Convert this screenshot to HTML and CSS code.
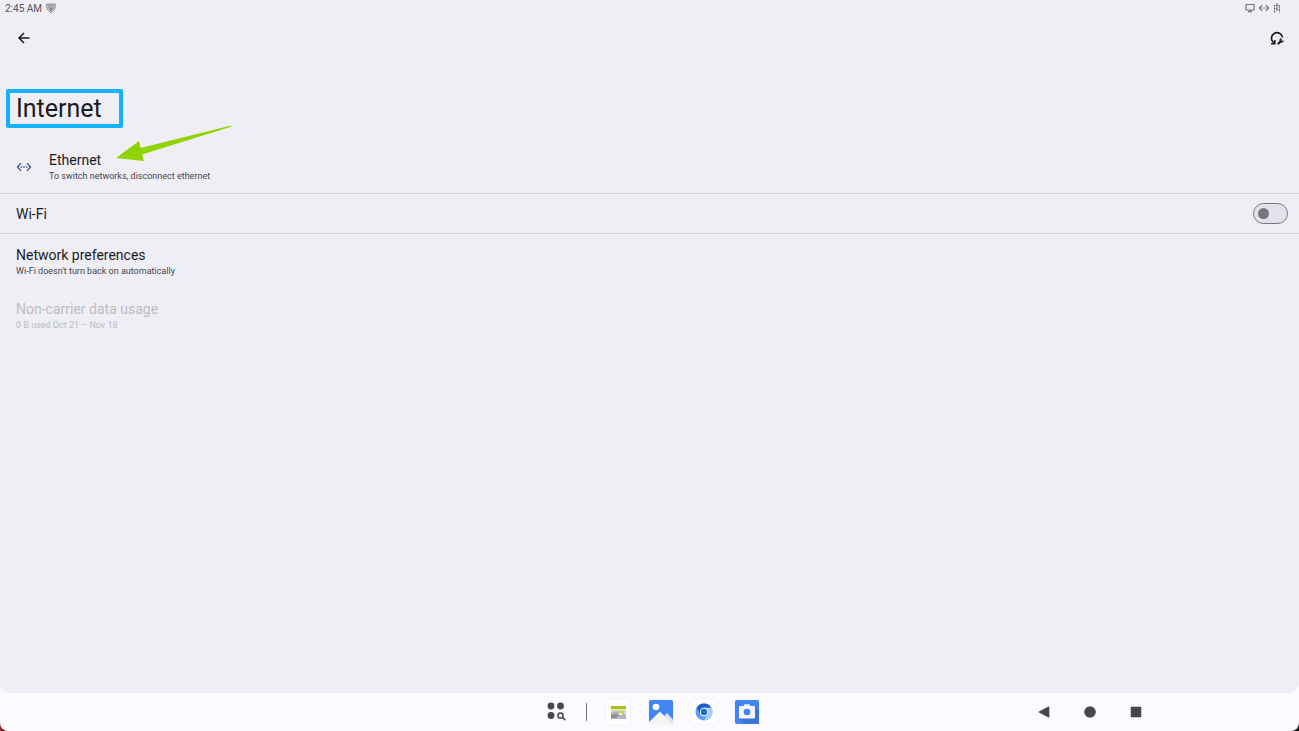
FILE: index.html
```html
<!DOCTYPE html>
<html lang="en">
<head>
    <meta charset="UTF-8">
    <meta name="viewport" content="width=device-width, initial-scale=1.0">
    <title>Internet</title>
    <link rel="stylesheet" href="styles.css">
</head>
<body>

<div class="device">
    <main class="screen">
        <div class="status-bar">
            <span class="clock">2:45 AM</span>
            <svg width="10" height="10" viewBox="0 0 10 10" fill="none" stroke="#77777b">
                <path d="M.8 1.2h8.4v2.6C9 6.500 7.200 8.300 5 9.400 2.800 8.300 1 6.500.8 3.800z"/>
                <path d="M3 2v3l2 2.500L7 5V2M5 2v5" stroke-width="1.200"/>
            </svg>
            <div class="status-icons">
                <svg width="10" height="10" viewBox="0 0 10 10" fill="none" stroke="#77777b" stroke-width="1.200">
                    <path d="M1 1.500h8v5.500H1z"/>
                    <path d="M3 8.500h4M5 7v1.500" stroke-width="1.400"/>
                </svg>
                <svg width="10" height="10" viewBox="0 0 10 10" fill="none" stroke="#69696d" stroke-width="1.200">
                    <path d="M2.800 2.500L.6 5l2.200 2.500M7.200 2.500L9.400 5 7.200 7.500"/>
                    <path d="M2.600 5h1M4.500 5h1M6.400 5h1"/>
                </svg>
                <svg width="8" height="10" viewBox="0 0 8 10" fill="none" stroke="#69696d">
                    <path d="M3 1h2M1.500 9.500v-7h5v7" stroke-dasharray="2 .6"/>
                    <path d="M4.600 3L3 6h2L3 8.500"/>
                </svg>
            </div>
        </div>

        <div class="toolbar">
            <button class="icon-button" type="button" aria-label="Back">
                <svg width="16" height="16" viewBox="0 0 16 16" fill="none" stroke="#1b1b1f" stroke-width="1.500">
                    <path d="M13.500 8H3.500M8 3L3 8l5 5"/>
                </svg>
            </button>
            <button class="icon-button" type="button" aria-label="Fix connectivity">
                <svg width="16" height="16" viewBox="0 0 16 16" fill="none" stroke="#1b1b1f">
                    <path d="M4.800 12.800A5.600 5.600 0 1 1 13.600 7.500" stroke-width="1.600"/>
                    <path d="M2 13.800h3.800V10" stroke-width="1.600"/>
                    <path d="M8.800 14.300l3-3" stroke-width="2"/>
                    <path d="M12.200 8.600a1.800 1.800 0 1 0 2.200 2.200l-1.300.7-1.200-1.200z" fill="#1b1b1f"/>
                </svg>
            </button>
        </div>

        <div class="title-area">
            <h1 class="title">Internet</h1>
        </div>

        <div class="row row-ethernet">
            <svg class="row-icon" width="16" height="16" viewBox="0 0 16 16" fill="none" stroke="#4f5b92" stroke-width="1.400">
                <path d="M5 4.300L1.500 8 5 11.700M11 4.300L14.500 8 11 11.700"/>
                <path d="M4.800 8h1.400M7.300 8h1.400M9.800 8h1.400"/>
            </svg>
            <div>
                <div class="row-title">Ethernet</div>
                <div class="row-summary">To switch networks, disconnect ethernet</div>
            </div>
            <!-- pointer over the ethernet row -->
            <svg class="arrow" width="118" height="38" viewBox="0 0 118 38" fill="#8fd400">
                <path d="M1 33L24 16l1.500 7L116 .5v1.200L27 29.500l2 6.500z"/>
            </svg>
        </div>

        <label class="row row-wifi" for="wifi">
            <span class="row-title">Wi-Fi</span>
            <input class="switch" id="wifi" type="checkbox" role="switch">
        </label>

        <div class="row">
            <div>
                <div class="row-title">Network preferences</div>
                <div class="row-summary">Wi-Fi doesn't turn back on automatically</div>
            </div>
        </div>

        <div class="row disabled">
            <div>
                <div class="row-title">Non-carrier data usage</div>
                <div class="row-summary">0 B used Oct 21 – Nov 18</div>
            </div>
        </div>
    </main>

    <footer class="taskbar">
        <div class="dock">
            <button class="icon-button" type="button" aria-label="All apps">
                <svg width="20" height="20" viewBox="0 0 20 20" fill="#44474e">
                    <circle cx="4" cy="4" r="3.400"/>
                    <circle cx="13.500" cy="4" r="3.400"/>
                    <circle cx="4" cy="13.500" r="3.400"/>
                    <circle cx="13.500" cy="13.500" r="2.600" fill="none" stroke="#44474e" stroke-width="1.500"/>
                    <path d="M15.300 15.300l3 3" stroke="#44474e" stroke-width="1.600"/>
                </svg>
            </button>
            <span class="divider"></span>
            <button class="app" type="button" aria-label="Gallery">
                <svg width="24" height="24" viewBox="0 0 24 24">
                    <path fill="#d5d7d5" d="M5 6h15v13H5z"/>
                    <path fill="#a5c514" d="M5 6h15v3H5z"/>
                    <path fill="#dfe5c0" d="M5 9h15v1.500H5z"/>
                    <path fill="#b5b9b7" d="M5 12l7-1 8 4v4H5z"/>
                    <path fill="#8b908f" d="M5 15l4-1 4 1-3 3H5z"/>
                    <path fill="#b8cf59" d="M11 11l3 1 3-2 1 3-4 2z"/>
                    <path fill="#f3f4f2" d="M13 13h3v2h-3z"/>
                </svg>
            </button>
            <button class="app app-blue" type="button" aria-label="Photos">
                <svg width="24" height="24" viewBox="0 0 24 24">
                    <circle cx="7" cy="7" r="3.300" fill="#fff"/>
                    <path fill="#e1e3e6" d="M12 20l6-7 6 6.500V24H12z"/>
                    <path fill="#f5f5f5" d="M0 22l11-10.500L23 24H0z"/>
                </svg>
            </button>
            <button class="app" type="button" aria-label="Browser">
                <svg width="24" height="24" viewBox="0 0 24 24">
                    <circle cx="12" cy="12" r="8.500" fill="#5e9cf5"/>
                    <path fill="#1d5fca" d="M4.600 7.800A8.500 8.500 0 0 1 19.400 7.800H12L8.300 14z"/>
                    <path fill="#a9cbfb" d="M19.400 7.800A8.500 8.500 0 0 1 12 20.500l3.700-6.400L12 7.800z"/>
                    <circle cx="12" cy="12" r="4.200" fill="#fff"/>
                    <circle cx="12" cy="12" r="3.200" fill="#2468d5"/>
                </svg>
            </button>
            <button class="app app-blue" type="button" aria-label="Camera">
                <svg width="24" height="24" viewBox="0 0 24 24">
                    <path fill="#3b76d6" d="M19.500 6.500L24 11v13H9l-4.500-5z"/>
                    <path fill="#f5f5f5" d="M5 6h3.500l1-1.800h5l1 1.800H19a1 1 0 0 1 1 1v10.500a1 1 0 0 1-1 1H5a1 1 0 0 1-1-1V7a1 1 0 0 1 1-1z"/>
                    <circle cx="12" cy="12" r="3.300" fill="#4285f4"/>
                </svg>
            </button>
        </div>
        <nav class="nav-buttons">
            <button class="icon-button" type="button" aria-label="Back">
                <svg width="12" height="12" viewBox="0 0 12 12" fill="#44474e"><path d="M10.500.6q.8-.4.800.5v9.800q0 .9-.8.500L1 6.600q-.8-.6 0-1.200z"/></svg>
            </button>
            <button class="icon-button" type="button" aria-label="Home">
                <svg width="12" height="12" viewBox="0 0 12 12" fill="#44474e"><circle cx="6" cy="6" r="5.800"/></svg>
            </button>
            <button class="icon-button" type="button" aria-label="Recent apps">
                <svg width="12" height="12" viewBox="0 0 12 12" fill="#44474e"><rect x=".7" y=".7" width="10.600" height="10.600" rx="1"/></svg>
            </button>
        </nav>
    </footer>
</div>

</body>
</html>
```
FILE: styles.css
```css
body {
    font-family: Roboto, "Liberation Sans", sans-serif;
    margin: 0;
    background: linear-gradient(to right, #8c2a22 2px, #1c1c1e 4px);
    color: #1b1b1f;
}
svg {
    display: block;
}
button {
    border: 0;
    padding: 0;
    background: none;
    cursor: pointer;
}
.device {
    min-height: 100vh;
    display: flex;
    flex-direction: column;
    background-color: #fcfaff;
    border-radius: 0 0 8px 8px;
}
.screen {
    flex: 1;
    background-color: #efeef4;
    border-radius: 0 0 10px 10px;
}
.status-bar {
    display: flex;
    align-items: center;
    gap: 4px;
    height: 16px;
    padding: 0 18px 0 5px;
}
.clock {
    font-size: 10px;
    color: #55555a;
}
.status-icons {
    display: flex;
    gap: 4px;
    margin-left: auto;
}
.toolbar {
    display: flex;
    justify-content: space-between;
    align-items: center;
    height: 44px;
    padding: 0 14px 0 16px;
}
.title-area {
    padding: 29px 6px 12px;
}
.title {
    width: max-content;
    margin: 0;
    padding: 0 17px 0 6px;
    border: 4px solid #14b1ff;
    border-radius: 2px;
    font-size: 25px;
    font-weight: 400;
    line-height: 31px;
}
.row {
    position: relative;
    display: flex;
    align-items: center;
    padding: 12px 11px 10px 16px;
}
.row-ethernet {
    gap: 17px;
    padding-top: 11px;
}
.row-wifi {
    justify-content: space-between;
    padding-top: 9px;
    padding-bottom: 9px;
    border-top: 1px solid #d5d4dc;
    border-bottom: 1px solid #d5d4dc;
}
.row-title {
    font-size: 14px;
    line-height: 18px;
}
.row-summary {
    font-size: 9px;
    line-height: 14px;
    color: #46464f;
}
.disabled .row-title,
.disabled .row-summary {
    color: #bdbcc3;
}
.arrow {
    position: absolute;
    left: 115px;
    top: -15px;
}
.switch {
    appearance: none;
    display: flex;
    align-items: center;
    box-sizing: border-box;
    width: 35px;
    height: 21px;
    margin: 0;
    padding: 0 4px;
    border: 1px solid #777680;
    border-radius: 11px;
    background-color: #e3e1e9;
}
.switch::before {
    content: "";
    width: 11px;
    height: 11px;
    border-radius: 50%;
    background-color: #777680;
}
.switch:checked {
    justify-content: flex-end;
}
.taskbar {
    display: grid;
    grid-template-columns: 1fr auto 1fr;
    align-items: center;
    height: 38px;
}
.dock {
    grid-column: 2;
    display: flex;
    align-items: center;
    gap: 19px;
    padding-left: 6px;
}
.divider {
    width: 1px;
    height: 18px;
    background-color: #77777c;
}
.app {
    width: 24px;
    height: 24px;
    border-radius: 2px;
    background-color: #fff;
    box-shadow: 0 0 2px #e2e1e6;
}
.app-blue {
    background-color: #4285f4;
}
.nav-buttons {
    display: flex;
    justify-content: flex-end;
    gap: 34px;
    padding-right: 157px;
}
```
